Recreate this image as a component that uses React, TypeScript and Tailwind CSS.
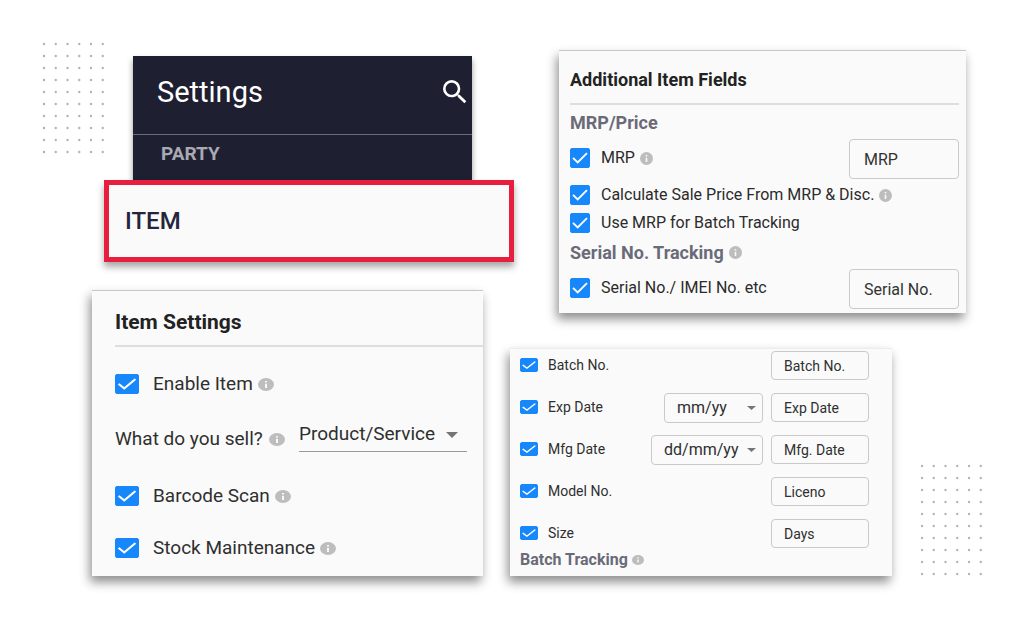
import type { ReactNode } from 'react';
import { MdSearch } from 'react-icons/md';
import clsx from 'clsx';

type Size = 'sm' | 'md' | 'lg';

const checkSizes: Record<Size, string> = {
  sm: 'w-[18px] h-[14px]',
  md: 'w-5 h-5',
  lg: 'w-6 h-5',
};

const infoSizes: Record<Size, string> = {
  sm: 'w-3 h-[10px]',
  md: 'w-[13px] h-[13px]',
  lg: 'w-4 h-[13px]',
};

const panelShadow = 'shadow-[-2px_6px_10px_rgba(0,0,0,0.45)]';

interface BatchField {
  id: string;
  label: string;
  value: string;
  format?: string;
}

const batchFields: BatchField[] = [
  { id: 'batch-no', label: 'Batch No.', value: 'Batch No.' },
  { id: 'exp-date', label: 'Exp Date', value: 'Exp Date', format: 'mm/yy' },
  { id: 'mfg-date', label: 'Mfg Date', value: 'Mfg. Date', format: 'dd/mm/yy' },
  { id: 'model-no', label: 'Model No.', value: 'Liceno' },
  { id: 'size', label: 'Size', value: 'Days' },
];

function Dots() {
  const cols = [0, 1, 2, 3, 4, 5];
  const rows = [0, 1, 2, 3, 4, 5, 6, 7, 8, 9];
  return (
    <svg className="w-[62px] h-[112px] shrink-0" viewBox="0 0 62 112" fill="#b3b3b3" aria-hidden="true">
      {rows.map((r) =>
        cols.map((c) => <circle key={`${r}-${c}`} cx={2 + c * 11.75} cy={2 + r * 12} r="1.2" />)
      )}
    </svg>
  );
}

function Info({ size }: { size: Size }) {
  return (
    <svg className={clsx('shrink-0', infoSizes[size])} viewBox="0 0 20 20" preserveAspectRatio="none" aria-hidden="true">
      <circle cx="10" cy="10" r="10" fill="#bdbdbd" />
      <path d="M8.8 4.6h2.4V7H8.8zM8.8 8.8h2.4v6.4H8.8z" fill="#fafafa" />
    </svg>
  );
}

function Arrow({ className }: { className: string }) {
  return (
    <svg className={clsx('pointer-events-none col-start-1 row-start-1 self-center justify-self-end', className)} viewBox="0 0 12 6" preserveAspectRatio="none" aria-hidden="true">
      <path d="M0 0h12L6 6z" fill="#757575" />
    </svg>
  );
}

interface CheckProps {
  id: string;
  size: Size;
  info?: boolean;
  className?: string;
  children: ReactNode;
}

function Check({ id, size, info, className, children }: CheckProps) {
  return (
    <div className={clsx('flex items-center', className)}>
      <span className="grid shrink-0">
        <input
          id={id}
          type="checkbox"
          defaultChecked
          className={clsx('peer col-start-1 row-start-1 appearance-none rounded-xs border border-[#1788fb] checked:bg-[#1788fb]', checkSizes[size])}
        />
        <svg
          className={clsx('pointer-events-none col-start-1 row-start-1 opacity-0 peer-checked:opacity-100', checkSizes[size])}
          viewBox="0 0 20 20"
          preserveAspectRatio="none"
          fill="none"
          aria-hidden="true"
        >
          <path d="M3 9.9l4.7 4.6L17 5.2" stroke="#fff" strokeWidth="1.9" />
        </svg>
      </span>
      <label htmlFor={id} className={clsx('whitespace-nowrap', size === 'lg' ? 'ml-[14px]' : size === 'md' ? 'ml-[11px]' : 'ml-[10px]')}>
        {children}
      </label>
      {info && <span className="ml-[5px] flex"><Info size={size} /></span>}
    </div>
  );
}

function SettingsHeader() {
  return (
    <div className="ml-[29px] mr-[42px] h-[124px] bg-[#1e1f30] shadow-[0_4px_6px_rgba(0,0,0,0.4)]">
      <div className="flex h-[79px] items-center justify-between border-b border-[#6b6c79] pb-[6px] pl-6 pr-[1px]">
        <h1 className="text-[29px] leading-8 text-white">Settings</h1>
        <button type="button" aria-label="Search">
          <MdSearch className="h-8 w-8 text-white" />
        </button>
      </div>
      <a href="#party" className="ml-7 mt-[7px] block text-[19px] leading-6 font-bold text-[#a8a9b3]">PARTY</a>
    </div>
  );
}

function ItemSettings() {
  return (
    <section className={clsx('ml-[50px] mr-[27px] mt-7 border-t border-[#c8c8c8] bg-[#fafafa] pb-3 pl-[23px] text-[19px] text-[#2f2f2f]', panelShadow)}>
      <h2 className="border-b-2 border-[#dedede] pb-[11px] pt-[19px] text-[21px] leading-6 font-bold text-[#222]">Item Settings</h2>
      <Check id="enable-item" size="lg" info className="mt-[21px] h-8">Enable Item</Check>
      <div className="mt-[19px] mr-4 flex h-10 items-center">
        <label htmlFor="sell" className="shrink-0 whitespace-nowrap">What do you sell?</label>
        <span className="ml-[6px] flex shrink-0"><Info size="lg" /></span>
        <span className="mb-2 ml-auto grid w-[168px] border-b border-[#9a9a9a]">
          <select id="sell" className="col-start-1 row-start-1 h-8 w-full appearance-none">
            <option>Product/Service</option>
          </select>
          <Arrow className="mr-[9px] h-[6px] w-3" />
        </span>
      </div>
      <Check id="barcode" size="lg" info className="mt-[21px] h-8">Barcode Scan</Check>
      <Check id="stock" size="lg" info className="mt-5 h-8">Stock Maintenance</Check>
    </section>
  );
}

function AdditionalFields() {
  const box = 'h-10 w-[110px] rounded-sm border border-[#c9c9c9] pl-[14px] text-[#333]';
  return (
    <section className={clsx('ml-[49px] mr-4 border-t border-[#c8c8c8] bg-[#fafafa] pb-1 pl-[11px] pr-[7px] text-[16px] text-[#2b2b2b]', panelShadow)}>
      <h2 className="border-b-2 border-[#dedede] pb-[11px] pt-[17px] text-[18px] leading-6 font-bold text-[#222]">Additional Item Fields</h2>
      <h3 className="pb-1 pt-[6px] text-[18px] leading-6 font-bold text-[#6b6a79]">MRP/Price</h3>
      <div className="flex items-center justify-between">
        <Check id="mrp" size="md" info className="pb-[2px]">MRP</Check>
        <input aria-label="MRP name" defaultValue="MRP" className={box} />
      </div>
      <Check id="calc-price" size="md" info className="mt-[2px] h-7">Calculate Sale Price From MRP &amp; Disc.</Check>
      <Check id="batch-mrp" size="md" className="h-[27px]">Use MRP for Batch Tracking</Check>
      <h3 className="flex h-[33px] items-center gap-[5px] text-[18px] font-bold text-[#6b6a79]">
        Serial No. Tracking <Info size="md" />
      </h3>
      <div className="flex items-center justify-between">
        <Check id="serial" size="md" className="pb-[2px]">Serial No./ IMEI No. etc</Check>
        <input aria-label="Serial number name" defaultValue="Serial No." className={box} />
      </div>
    </section>
  );
}

function BatchFields() {
  return (
    <section className={clsx('min-w-0 flex-1 border-t border-[#ececec] bg-[#fafafa] pb-[5px] pl-[10px] pr-[23px] pt-[2px] text-[14px] text-[#2f2f2f]', panelShadow)}>
      <div className="flex flex-col gap-3">
        {batchFields.map((field) => (
          <div key={field.id} className="flex h-[30px] items-start">
            <Check id={field.id} size="sm" className="h-7">{field.label}</Check>
            {field.format && (
              <span className={clsx('ml-auto grid', field.format === 'mm/yy' ? 'w-[99px]' : 'w-[112px]')}>
                <select
                  aria-label={`${field.label} format`}
                  className="col-start-1 row-start-1 h-[30px] appearance-none rounded-sm border border-[#c9c9c9] pl-3 text-[16px]"
                >
                  <option>{field.format}</option>
                </select>
                <Arrow className="mr-[7px] h-1 w-[9px]" />
              </span>
            )}
            <input
              aria-label={`${field.label} name`}
              defaultValue={field.value}
              className={clsx('h-[29px] w-[98px] rounded-sm border border-[#c9c9c9] pl-3', field.format ? 'ml-2' : 'ml-auto')}
            />
          </div>
        ))}
      </div>
      <h3 className="flex h-[22px] items-center gap-1 text-[16px] font-bold text-[#6b6a79]">
        Batch Tracking <Info size="sm" />
      </h3>
    </section>
  );
}

export default function App() {
  return (
    <main className="grid min-h-screen grid-cols-[468fr_472fr] bg-white px-[42px] pt-[42px] font-[Roboto,sans-serif]">
      <div className="min-w-0">
        <div className="flex">
          <Dots />
          <div className="-mr-1 min-w-0 flex-1 pt-[14px]">
            <SettingsHeader />
            <a
              href="#item"
              className="relative flex h-[82px] items-center border-[5px] border-[#e81e3f] bg-[#fafafa] pl-4 text-[24px] font-medium text-[#24253a] shadow-[0_5px_7px_rgba(0,0,0,0.35)]"
            >
              ITEM
            </a>
          </div>
        </div>
        <ItemSettings />
      </div>
      <div className="min-w-0 pt-2">
        <AdditionalFields />
        <div className="mt-[35px] flex items-end gap-7">
          <BatchFields />
          <Dots />
        </div>
      </div>
    </main>
  );
}
